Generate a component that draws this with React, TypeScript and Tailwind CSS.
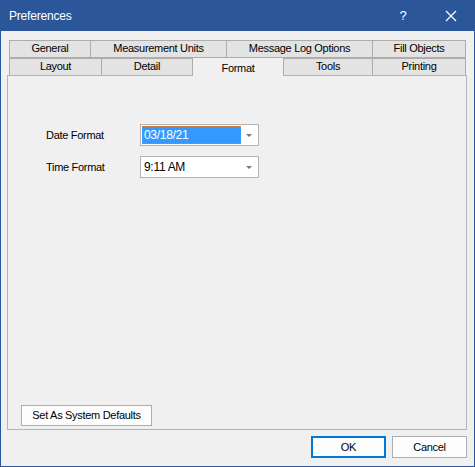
import React from 'react';

const row1 = [
  { label: 'General', w: 'w-[81px]' },
  { label: 'Measurement Units', w: 'w-[136px]' },
  { label: 'Message Log Options', w: 'w-[146px]' },
  { label: 'Fill Objects', w: 'w-[94px] border-r' },
];

const row2 = [
  { label: 'Layout', w: 'w-[92px]' },
  { label: 'Detail', w: 'w-[91px]' },
  { label: 'Format', w: 'w-[91px]', active: true },
  { label: 'Tools', w: 'w-[89px]' },
  { label: 'Printing', w: 'w-[94px] border-r' },
];

const Combo: React.FC<{ value: string; selected?: boolean }> = ({ value, selected }) => (
  <div className="w-[119px] h-[22px] border border-[#b4b4b4] bg-white flex items-center p-px text-[12px]">
    <div className="flex-1 h-full">
      {selected ? (
        <div className="w-[99px] h-[18px] bg-[#3399ff] text-white border border-dotted border-[#d08040] flex items-center pl-px">
          {value}
        </div>
      ) : (
        <div className="h-[18px] flex items-center pl-[2px]">{value}</div>
      )}
    </div>
    <svg width="16" height="18" viewBox="0 0 16 18" className="shrink-0">
      <path d="M5 8h6l-3 3z" fill="#7a7a7a" />
    </svg>
  </div>
);

const App: React.FC = () => {
  return (
    <div className="w-[475px] h-[467px] flex flex-col bg-[#f0f0f0] text-[11px] tracking-[-0.3px] text-black font-['Liberation_Sans',Arial,sans-serif] border-x border-b border-[#2b579a]">
      <div className="h-[31px] -mx-px bg-[#2b579a] text-white flex items-center pl-[9px] shrink-0 tracking-normal">
        <span className="flex-1 text-[12px] tracking-[-0.2px]">Preferences</span>
        <span className="w-[16px] text-center text-[13px] mr-[33px]">?</span>
        <svg width="14" height="14" viewBox="0 0 14 14" className="mr-[17px]">
          <path d="M2 2l10 10M12 2L2 12" stroke="white" strokeWidth="1.2" />
        </svg>
      </div>

      <div className="flex-1 flex flex-col pt-[9px] pl-[6px]">
        <div className="w-[460px] flex flex-col">
          <div className="flex ml-[2px]">
            {row1.map((t) => (
              <div
                key={t.label}
                className={`${t.w} h-[18px] border-t border-l border-b border-[#adadad] bg-[#e3e3e3] flex items-center justify-center pb-px`}
              >
                {t.label}
              </div>
            ))}
          </div>
          <div className="flex ml-[2px] items-end">
            {row2.map((t) =>
              t.active ? (
                <div
                  key={t.label}
                  className={`${t.w} h-[18px] -mb-px relative z-10 border-l border-[#adadad] bg-[#f0f0f0] flex items-center justify-center pt-[3px]`}
                >
                  {t.label}
                </div>
              ) : (
                <div
                  key={t.label}
                  className={`${t.w} h-[17px] border-t border-l border-[#adadad] bg-[#e3e3e3] flex items-center justify-center pb-px`}
                >
                  {t.label}
                </div>
              ),
            )}
          </div>

          <div className="h-[355px] border border-[#b4b4b4] flex flex-col">
            <div className="flex flex-col gap-[10px] pt-[48px] pl-[38px]">
              <div className="flex items-center">
                <span className="w-[94px]">Date Format</span>
                <Combo value="03/18/21" selected />
              </div>
              <div className="flex items-center">
                <span className="w-[94px]">Time Format</span>
                <Combo value="9:11 AM" />
              </div>
            </div>
            <div className="mt-auto pl-[13px] pb-[3px]">
              <button className="w-[131px] h-[21px] border border-[#adadad] bg-[#fdfdfd] flex items-center justify-center">
                Set As System Defaults
              </button>
            </div>
          </div>

          <div className="flex justify-end gap-[6px] mt-[6px]">
            <button className="w-[75px] h-[22px] border-2 border-[#0078d7] bg-[#fdfdfd] flex items-center justify-center">
              OK
            </button>
            <button className="w-[75px] h-[22px] border border-[#adadad] bg-[#fdfdfd] flex items-center justify-center">
              Cancel
            </button>
          </div>
        </div>
      </div>
    </div>
  );
};

export default App;
